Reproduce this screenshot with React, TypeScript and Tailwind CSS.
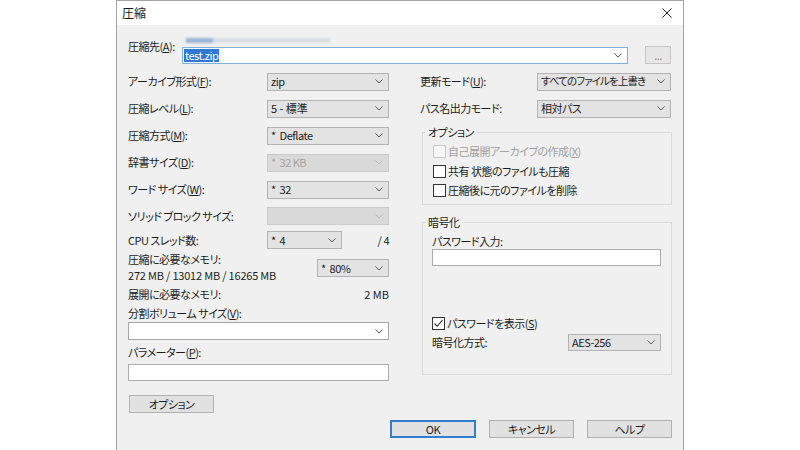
import React from 'react';

const Chevron: React.FC<{ disabled?: boolean }> = ({ disabled }) => (
  <svg width="8" height="5" viewBox="0 0 8 5" className="shrink-0">
    <polyline
      points="0.5,0.5 4,4 7.5,0.5"
      fill="none"
      stroke={disabled ? '#b8b8b8' : '#5a5a5a'}
      strokeWidth="1"
    />
  </svg>
);

interface ComboProps {
  value?: string;
  className?: string;
  textClass?: string;
  disabled?: boolean;
}

const Combo: React.FC<ComboProps> = ({ value = '', className = '', textClass = '', disabled }) => (
  <div
    className={`flex items-center justify-between pl-[3px] pr-[5px] border leading-none ${
      disabled
        ? 'bg-[#d9d9d9] border-[#cbcbcb] text-[#a3a3a3]'
        : 'bg-[#e3e3e3] border-[#b3b3b3] text-[#1c1c1c]'
    } ${className}`}
  >
    <span className={`whitespace-pre ${textClass}`}>{value}</span>
    <Chevron disabled={disabled} />
  </div>
);

const Check: React.FC<{ label: React.ReactNode; checked?: boolean; disabled?: boolean }> = ({
  label,
  checked,
  disabled,
}) => (
  <div className="flex items-center">
    <div
      className={`w-[13px] h-[13px] border flex items-center justify-center ${
        disabled ? 'border-[#c9c9c9] bg-[#f7f7f7]' : 'border-[#333] bg-white'
      }`}
    >
      {checked && (
        <svg width="11" height="11" viewBox="0 0 11 11">
          <polyline points="1.5,5.5 4.2,8.3 9.5,2" fill="none" stroke="#222" strokeWidth="1.1" />
        </svg>
      )}
    </div>
    <span className={`ml-[2px] leading-none ${disabled ? 'text-[#a0a0a0]' : ''}`}>{label}</span>
  </div>
);

const Btn: React.FC<{ children: React.ReactNode; className?: string; primary?: boolean }> = ({
  children,
  className = '',
  primary,
}) => (
  <div
    className={`h-[18px] flex items-center justify-center bg-[#e1e1e1] border leading-none ${
      primary ? 'border-[#2f80d1] shadow-[inset_0_0_0_1px_#2f80d1]' : 'border-[#b0b0b0]'
    } ${className}`}
  >
    {children}
  </div>
);

const App: React.FC = () => {
  return (
    <div className="w-[800px] h-[450px] bg-white overflow-hidden font-['Noto_Sans_CJK_JP','Liberation_Sans',sans-serif] text-[11px] tracking-[-0.5px] text-[#1c1c1c] [font-feature-settings:'palt']">
      <div className="ml-[116px] w-[568px] h-[451px] border border-b-0 border-[#a3a3a3] flex flex-col">
        {/* Title bar */}
        <div className="h-[24px] bg-white flex items-center justify-between pl-[5px] pr-[11px]">
          <span className="text-[12px] leading-none tracking-normal">圧縮</span>
          <svg width="10" height="10" viewBox="0 0 10 10">
            <path d="M0.5 0.5 L9.5 9.5 M9.5 0.5 L0.5 9.5" stroke="#222" strokeWidth="1" />
          </svg>
        </div>

        {/* Body */}
        <div className="flex-1 bg-[#f0f0f0] px-[11px] pt-[11px]">
          {/* Destination */}
          <div className="flex h-[28px]">
            <div className="w-[54px] pt-[3px] leading-[14px]">
              圧縮先(<u>A</u>):
            </div>
            <div className="w-[446px] flex flex-col">
              <div className="h-[5px] mt-[2px] pl-[4px] flex blur-[1px]">
                <div className="w-[27px] bg-[#9ab4d8]" />
                <div className="w-[117px] bg-[#d9dde3]" />
              </div>
              <div className="mt-[4px] h-[17px] bg-white border border-[#7eb0dc] flex items-center justify-between pl-px pr-[5px]">
                <span className="bg-[#2f78d4] text-white leading-[13px] px-px">test.zip</span>
                <Chevron />
              </div>
            </div>
            <div className="ml-[17px] mt-[10px] w-[26px] h-[18px] bg-[#e6e6e6] border border-[#c6c6c6] flex items-center justify-center text-[#888] leading-none">
              ...
            </div>
          </div>

          {/* Columns */}
          <div className="flex items-start mt-[4px]">
            {/* Left column */}
            <div className="w-[261px] flex flex-col">
              <div className="h-[27px] flex items-center">
                <span className="w-[139px]">アーカイブ形式(<u>F</u>):</span>
                <Combo value="zip" className="w-[122px] h-[18px]" />
              </div>
              <div className="h-[27px] flex items-center">
                <span className="w-[139px]">圧縮レベル(<u>L</u>):</span>
                <Combo value="5 - 標準" textClass="tracking-normal" className="w-[122px] h-[18px]" />
              </div>
              <div className="h-[27px] flex items-center">
                <span className="w-[139px]">圧縮方式(<u>M</u>):</span>
                <Combo value="*  Deflate" className="w-[122px] h-[18px]" />
              </div>
              <div className="h-[27px] flex items-center">
                <span className="w-[139px]">辞書サイズ(<u>D</u>):</span>
                <Combo value="*  32 KB" disabled className="w-[122px] h-[18px]" />
              </div>
              <div className="h-[27px] flex items-center">
                <span className="w-[139px]">ワード サイズ(<u>W</u>):</span>
                <Combo value="*  32" className="w-[122px] h-[18px]" />
              </div>
              <div className="h-[26px] flex items-center">
                <span className="w-[139px]">ソリッド ブロック サイズ:</span>
                <Combo disabled className="w-[122px] h-[18px]" />
              </div>
              <div className="h-[22px] flex items-center">
                <span className="w-[139px]">CPU スレッド数:</span>
                <Combo value="*  4" className="w-[75px] h-[18px]" />
                <span className="ml-auto">/ 4</span>
              </div>
              <div className="h-[32px] flex items-center justify-between">
                <div className="flex flex-col leading-[16px]">
                  <span>圧縮に必要なメモリ:</span>
                  <span className="tracking-[-0.2px]">272 MB / 13012 MB / 16265 MB</span>
                </div>
                <Combo value="*  80%" className="w-[72px] h-[18px] mt-[2px]" />
              </div>
              <div className="h-[22px] flex items-center justify-between">
                <span>展開に必要なメモリ:</span>
                <span className="tracking-normal">2 MB</span>
              </div>
              <div className="leading-[16px]">
                分割ボリューム サイズ(<u>V</u>):
              </div>
              <div className="mt-px h-[18px] bg-white border border-[#a6a6a6] flex items-center justify-end pr-[5px]">
                <Chevron />
              </div>
              <div className="mt-[4px] leading-[16px]">
                パラメーター(<u>P</u>):
              </div>
              <div className="mt-[4px] h-[17px] bg-white border border-[#acacac]" />
              <Btn className="mt-[14px] ml-px w-[85px]">オプション</Btn>
            </div>

            {/* Right column */}
            <div className="ml-[31px] w-[252px] flex flex-col">
              <div className="h-[27px] flex items-center">
                <span className="w-[117px]">更新モード(<u>U</u>):</span>
                <Combo
                  value="すべてのファイルを上書き"
                  textClass="text-[10.5px] tracking-[-0.9px]"
                  className="w-[134px] h-[18px]"
                />
              </div>
              <div className="h-[27px] flex items-center">
                <span className="w-[117px]">パス名出力モード:</span>
                <Combo value="相対パス" className="w-[134px] h-[18px]" />
              </div>

              <fieldset className="ml-[2px] mt-[3px] w-[250px] border border-[#dadada] pb-[4px]">
                <legend className="ml-[3px] px-[2px] leading-[14px]">オプション</legend>
                <div className="mt-[3px] pl-[10px] flex flex-col">
                  <div className="h-[19px] flex items-center">
                    <Check disabled label={<>自己展開アーカイブの作成(<u>X</u>)</>} />
                  </div>
                  <div className="h-[20px] flex items-center">
                    <Check label="共有 状態のファイルも圧縮" />
                  </div>
                  <div className="h-[19px] flex items-center">
                    <Check label="圧縮後に元のファイルを削除" />
                  </div>
                </div>
              </fieldset>

              <fieldset className="ml-[2px] mt-[10px] w-[250px] border border-[#dadada] pl-[9px] pr-[10px] pb-[23px]">
                <legend className="-ml-[6px] px-[2px] leading-[14px]">暗号化</legend>
                <div className="mt-[5px] leading-[14px]">パスワード入力:</div>
                <div className="mt-px h-[17px] bg-white border border-[#acacac]" />
                <div className="mt-[49px] h-[17px] flex items-center">
                  <Check checked label={<>パスワードを表示(<u>S</u>)</>} />
                </div>
                <div className="mt-px h-[18px] flex items-center justify-between">
                  <span>暗号化方式:</span>
                  <Combo value="AES-256" className="w-[93px] h-[17px]" />
                </div>
              </fieldset>
            </div>
          </div>

          {/* Bottom buttons */}
          <div className="mt-[7px] flex justify-end gap-[13px]">
            <Btn primary className="w-[86px]">OK</Btn>
            <Btn className="w-[85px]">キャンセル</Btn>
            <Btn className="w-[85px]">ヘルプ</Btn>
          </div>
        </div>
      </div>
    </div>
  );
};

export default App;
